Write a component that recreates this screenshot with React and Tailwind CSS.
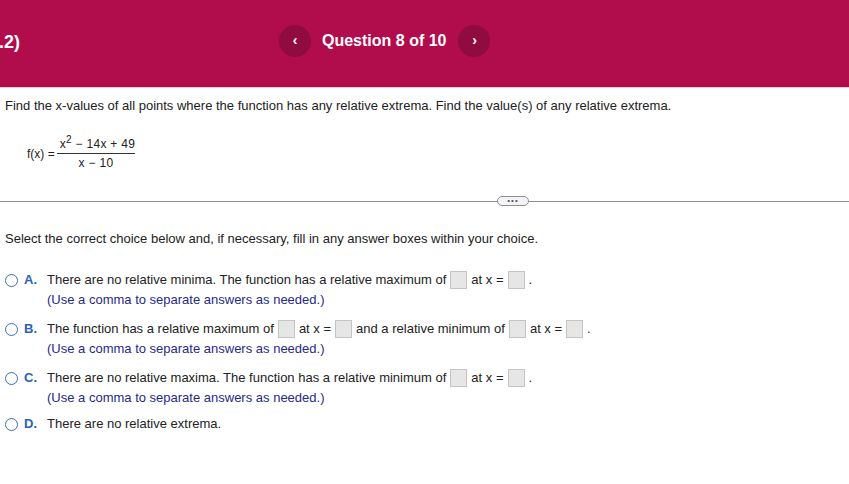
import React from 'react';

const Box = () => (
  <span className="inline-block w-[17px] h-[18px] align-middle mx-[4px] bg-[#e6e6e6] border border-[#c4c4c4]" />
);

const Radio = () => (
  <span className="inline-block w-[13px] h-[13px] rounded-full border-[1.5px] border-[#3f6fb0] bg-white" />
);

const Choice = ({ letter, children, note, className = '' }) => (
  <div className={`flex items-start ${className}`}>
    <div className="flex items-center h-[20px] pl-[5px] w-[47px]">
      <Radio />
      <span className="ml-[6px] text-[#2a62b8] font-bold text-[13px]">{letter}.</span>
    </div>
    <div>
      <div className="h-[20px] flex items-center text-[#222] whitespace-nowrap">{children}</div>
      {note && <div className="h-[19px] flex items-center text-[#1f2a8a]">(Use a comma to separate answers as needed.)</div>}
    </div>
  </div>
);

export default function App() {
  return (
    <div className="w-[849px] h-[484px] bg-white overflow-hidden text-[13px] text-[#222]" style={{ fontFamily: 'Arial, "Liberation Sans", sans-serif' }}>
      {/* header */}
      <div className="h-[88px] bg-[#b10c4c] flex items-center relative border-b border-[#f3c6d8]">
        <div className="absolute left-[-1px] top-[29px] text-white font-bold text-[18px]">.2)</div>
        <div className="flex items-center ml-[279px] mt-[-6px]">
          <button className="w-[32px] h-[32px] rounded-full bg-[#8f0b40] text-white text-[14px] font-bold flex items-center justify-center">‹</button>
          <div className="ml-[11px] mr-[12px] text-white font-bold text-[16px]">Question 8 of 10</div>
          <button className="w-[32px] h-[32px] rounded-full bg-[#8f0b40] text-white text-[14px] font-bold flex items-center justify-center">›</button>
        </div>
      </div>

      <div className="pl-[5px] pt-[10px] h-[15px] leading-[15px] box-content">
        Find the x-values of all points where the function has any relative extrema. Find the value(s) of any relative extrema.
      </div>

      {/* function */}
      <div className="flex items-center pl-[27px] mt-[24px]">
        <span className="text-[12px]">f(x) =</span>
        <div className="ml-[2px] flex flex-col items-center">
          <div className="pl-[3px] pb-[1px] leading-[15px] text-[12px] tracking-[0.3px] whitespace-nowrap">
            x<sup className="text-[10px] relative top-[-5px]">2</sup> − 14x + 49
          </div>
          <div className="w-[78px] border-t border-[#333]" />
          <div className="pt-[2px] leading-[15px] text-[12px] tracking-[0.3px]">x − 10</div>
        </div>
      </div>

      {/* divider */}
      <div className="relative mt-[25px] h-[11px] flex items-center">
        <div className="w-full border-t border-[#8e8e96]" />
        <div className="absolute left-[497px] top-0 w-[32px] h-[10px] rounded-full border border-[#8e8e96] bg-[#f4f4f6] flex items-center justify-center text-[#555] text-[8px] leading-none tracking-[1px]">•••</div>
      </div>

      <div className="pl-[5px] mt-[24px] leading-[15px]">
        Select the correct choice below and, if necessary, fill in any answer boxes within your choice.
      </div>

      <div className="mt-[24px] flex flex-col gap-[10px]">
        <Choice letter="A" note>
          There are no relative minima. The function has a relative maximum of <Box /> at x = <Box />.
        </Choice>
        <Choice letter="B" note>
          The function has a relative maximum of <Box /> at x = <Box /> and a relative minimum of <Box /> at x = <Box />.
        </Choice>
        <Choice letter="C" note>
          There are no relative maxima. The function has a relative minimum of <Box /> at x = <Box />.
        </Choice>
        <Choice letter="D" className="mt-[-3px]">
          There are no relative extrema.
        </Choice>
      </div>
    </div>
  );
}
